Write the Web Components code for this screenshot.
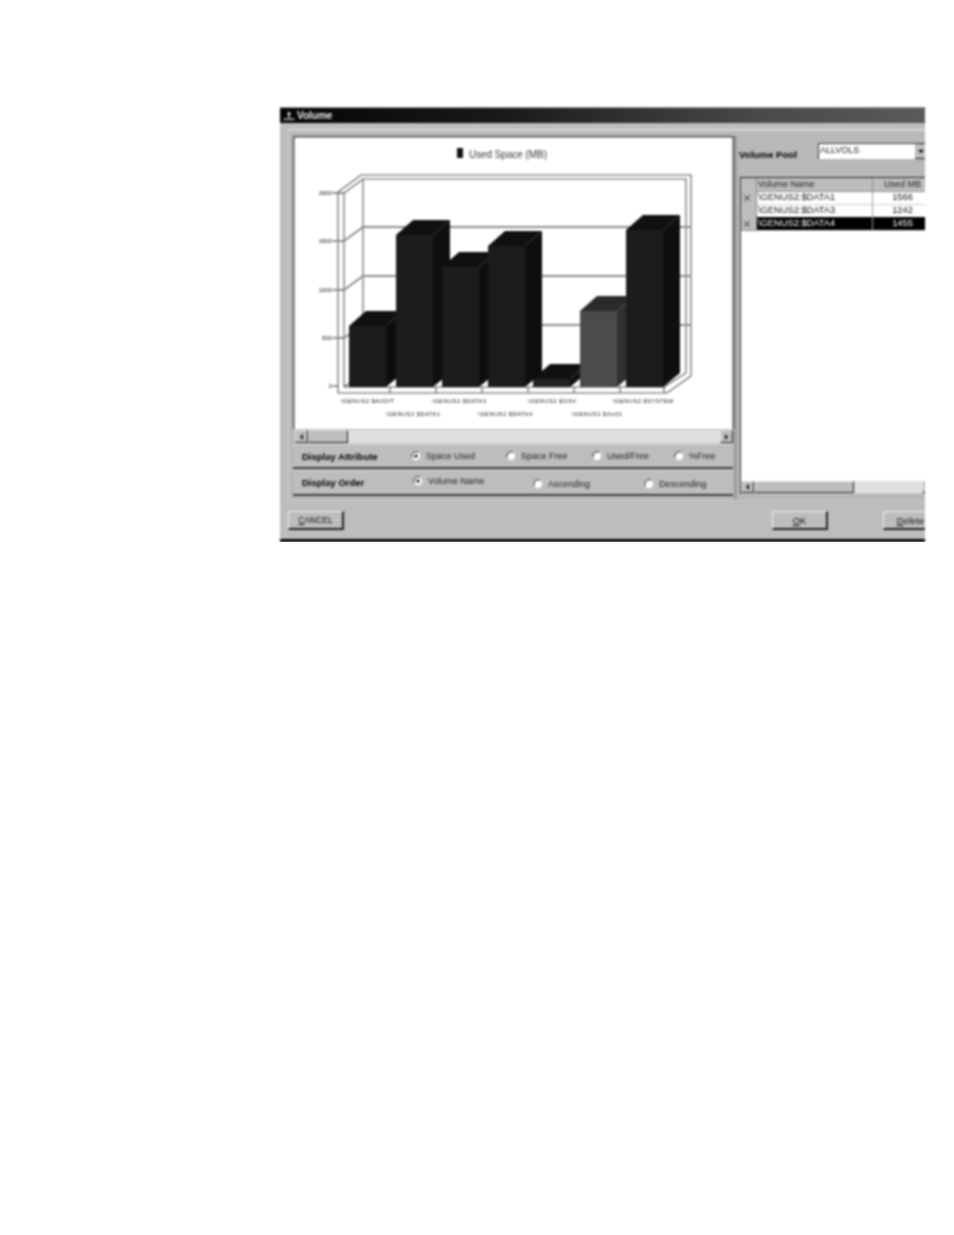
<!DOCTYPE html>
<html>
<head>
<meta charset="utf-8">
<title>Volume</title>
<style>
    body { margin: 0; background: #fff; font-family: "Liberation Sans", Arial, sans-serif; }
</style>
</head>
<body>
<vol-window>
    <vol-chart slot="chart"></vol-chart>
    <win-scrollbar slot="chart" thumb="40" style="height:14px;margin:1px 1px 0 2px"></win-scrollbar>
    <radio-row slot="chart" label="Display Attribute" columns="109px 95px 86px 82px auto" style="height:25px">
        <radio-opt checked>Space Used</radio-opt>
        <radio-opt>Space Free</radio-opt>
        <radio-opt>Used/Free</radio-opt>
        <radio-opt>%Free</radio-opt>
    </radio-row>
    <radio-row slot="chart" label="Display Order" columns="111px 120px 111px auto" style="height:26px;margin-top:1px">
        <radio-opt checked raised>Volume Name</radio-opt>
        <radio-opt low>Ascending</radio-opt>
        <radio-opt low>Descending</radio-opt>
    </radio-row>

    <vol-pool slot="side" value="ALLVOLS"></vol-pool>
    <vol-grid slot="side">
        <grid-row name="\GENUS2:$DATA1" mb="1566" marked></grid-row>
        <grid-row name="\GENUS2:$DATA3" mb="1242"></grid-row>
        <grid-row name="\GENUS2:$DATA4" mb="1455" marked selected></grid-row>
    </vol-grid>

    <win-button slot="cancel" key="C" rest="ANCEL" style="font-size:8.5px"></win-button>
    <win-button slot="ok" key="O" rest="K"></win-button>
    <win-button slot="delete" key="D" rest="elete"></win-button>
</vol-window>

<script>
class VolWindow extends HTMLElement {
    constructor() {
        super();
        this.attachShadow({ mode: 'open' });
    }

    connectedCallback() {
        this.shadowRoot.innerHTML = `
            <style>
                :host {
                    display: block;
                    box-sizing: border-box;
                    width: 645px;
                    height: 435px;
                    margin: 107px 0 0 280px;
                    overflow: hidden;
                    background: #bdbdbd;
                    border-top: 1px solid #999;
                    border-bottom: 3px solid #000;
                    filter: blur(0.8px);
                    color: #222;
                    font: 9.5px "Liberation Sans", Arial, sans-serif;
                }
                .title {
                    display: flex;
                    align-items: center;
                    gap: 2px;
                    height: 15px;
                    padding-left: 3px;
                    background: linear-gradient(90deg, #050505, #1a1a1a 35%, #4a4a4a 75%, #5a5a5a);
                    color: #eee;
                    font-weight: bold;
                    font-size: 10px;
                }
                .main {
                    display: flex;
                    box-sizing: border-box;
                    width: 700px;
                    height: 372px;
                    margin: 6px 0 0 8px;
                    padding: 5px 0 0 4px;
                    background: #b8b8b8;
                    border-top: 2px solid #d6d6d6;
                    border-left: 1px solid #d0d0d0;
                    border-bottom: 1px solid #c8c8c8;
                }
                .left {
                    display: flex;
                    flex-direction: column;
                    flex: none;
                    width: 441px;
                    border-right: 3px solid #9c9c9c;
                }
                .right {
                    display: flex;
                    flex-direction: column;
                    flex: none;
                    width: 240px;
                    padding-left: 2px;
                }
                .buttons {
                    display: grid;
                    grid-template-columns: 484px 111px 100px;
                    width: 700px;
                    padding: 10px 0 0 8px;
                }
            </style>
            <div class="title">
                <svg width="12" height="10" viewBox="0 0 12 10">
                    <circle cx="6" cy="2.5" r="1.6" fill="#ddd"/>
                    <path d="M5 4h2v2.5H5zM0.5 7.5h11v1.5h-11z" fill="#bbb"/>
                </svg>
                <span>Volume</span>
            </div>
            <div class="main">
                <div class="left"><slot name="chart"></slot></div>
                <div class="right"><slot name="side"></slot></div>
            </div>
            <div class="buttons">
                <slot name="cancel"></slot>
                <slot name="ok"></slot>
                <slot name="delete"></slot>
            </div>
        `;
    }
}

class VolChart extends HTMLElement {
    constructor() {
        super();
        this.attachShadow({ mode: 'open' });
    }

    bar(x, top, colors) {
        const w = 37, dx = 17, dy = 15, base = 387;
        return `
            <polygon points="${x},${top} ${x + dx},${top - dy} ${x + w + dx},${top - dy} ${x + w},${top}" fill="${colors[1]}"/>
            <polygon points="${x + w},${top} ${x + w + dx},${top - dy} ${x + w + dx},${base - 14} ${x + w},${base}" fill="${colors[2]}"/>
            <rect x="${x}" y="${top}" width="${w}" height="${base - top}" fill="${colors[0]}"/>
        `;
    }

    render() {
        const dark = ['#1c1c1c', '#101010', '#0e0e0e'];
        const bars = [
            [349, 326, dark],
            [396, 235, dark],
            [442, 267, dark],
            [488, 246, dark],
            [533, 379, ['#232323', '#101010', '#101010']],
            [580, 311, ['#4b4b4b', '#2a2a2a', '#303030']],
            [626, 230, dark],
        ];
        const grid = [[241, 227], [290, 276], [338, 325]];
        const axis = [['2000', 193], ['1500', 241], ['1000', 290], ['500', 338], ['0', 386]];
        const ticks = [390, 436, 482, 528, 574, 620];
        const labels = [
            ['\\GENUS2.$AUDIT', 341, 401, 53],
            ['\\GENUS2.$DATA1', 386, 414, 54],
            ['\\GENUS2.$DATA3', 432, 401, 54],
            ['\\GENUS2.$DATA4', 478, 414, 54],
            ['\\GENUS2.$OSV', 528, 401, 48],
            ['\\GENUS2.$Ox01', 572, 414, 50],
            ['\\GENUS2.$SYSTEM', 613, 401, 60],
        ];

        this.shadowRoot.innerHTML = `
            <style>
                :host { display: block; width: 441px; height: 293px; flex: none; }
                svg { display: block; }
                text { font-family: "Liberation Sans", Arial, sans-serif; fill: #111; }
                .wall { fill: none; stroke: #555; stroke-width: 1.1; }
                .grid { fill: none; stroke: #8c8c8c; stroke-width: 1.8; }
            </style>
            <svg width="441" height="293" viewBox="293 136 441 293">
                <rect x="293.7" y="136.7" width="439.6" height="293" fill="#fff" stroke="#444" stroke-width="1.4"/>

                <rect x="457" y="148" width="6" height="10" fill="#111"/>
                <text x="469" y="158" font-size="10" style="fill:#333" textLength="78">Used Space (MB)</text>

                <path class="wall" d="M338 393V192L361 175H691V376L667 393H338"/>
                <path class="wall" d="M344 387V193L363 179H686V373L664 387H344"/>
                <path class="wall" d="M363 179V373L344 387M664 387V393"/>
                ${grid.map(([front, back]) => `<path class="grid" d="M333 ${front}H344L363 ${back}H691"/>`).join('')}
                <path class="grid" d="M333 193H344M333 386H338"/>
                ${ticks.map(x => `<path class="wall" d="M${x} 387V393"/>`).join('')}

                ${axis.map(([t, y]) => `<text x="332" y="${y + 2}" font-size="6" text-anchor="end">${t}</text>`).join('')}
                ${bars.map(b => this.bar(...b)).join('')}
                ${labels.map(([t, x, y, w]) => `<text x="${x}" y="${y + 2}" font-size="5.6" textLength="${w}">${t}</text>`).join('')}
            </svg>
        `;
    }

    connectedCallback() {
        this.render();
    }
}

class WinScrollbar extends HTMLElement {
    constructor() {
        super();
        this.attachShadow({ mode: 'open' });
    }

    connectedCallback() {
        const thumb = this.getAttribute('thumb');
        this.shadowRoot.innerHTML = `
            <style>
                :host {
                    display: flex;
                    flex: none;
                    box-sizing: border-box;
                    background: #dfdfdf;
                    border-bottom: 1px solid #c8c8c8;
                }
                div {
                    box-sizing: border-box;
                    flex: none;
                    background: #bdbdbd;
                    border-right: 1px solid #222;
                    border-bottom: 1px solid #222;
                    border-top: 1px solid #e4e4e4;
                    border-left: 1px solid #e4e4e4;
                }
                .btn { display: flex; align-items: center; justify-content: center; width: 13px; }
                .thumb { width: ${thumb}px; }
                .fill { flex: 1; }
                i { width: 0; height: 0; border: 3px solid transparent; }
                .l i { border-right-color: #111; border-left-width: 0; }
                .r i { border-left-color: #111; border-right-width: 0; }
            </style>
            <div class="btn l"><i></i></div>
            <div class="thumb"></div>
            <span class="fill"></span>
            <div class="btn r"><i></i></div>
        `;
    }
}

class RadioRow extends HTMLElement {
    constructor() {
        super();
        this.attachShadow({ mode: 'open' });
    }

    connectedCallback() {
        this.shadowRoot.innerHTML = `
            <style>
                :host {
                    display: grid;
                    grid-template-columns: ${this.getAttribute('columns')};
                    align-items: center;
                    flex: none;
                    box-sizing: border-box;
                    padding-left: 9px;
                    margin-right: 1px;
                    background: #bdbdbd;
                    border-top: 1px solid #d2d2d2;
                    border-bottom: 2px solid #3c3c3c;
                }
                b { color: #000; font-size: 9.5px; }
            </style>
            <b>${this.getAttribute('label')}</b>
            <slot></slot>
        `;
    }
}

class RadioOpt extends HTMLElement {
    constructor() {
        super();
        this.attachShadow({ mode: 'open' });
    }

    connectedCallback() {
        const dot = this.hasAttribute('checked') ? '<circle cx="5" cy="5" r="1.6" fill="#000"/>' : '';
        this.shadowRoot.innerHTML = `
            <style>
                :host {
                    display: flex;
                    align-items: center;
                    gap: 5px;
                    color: #222;
                    font-size: 9px;
                }
                :host([raised]) { margin-top: -3px; }
                :host([low]) { margin-top: 3px; }
                svg { flex: none; }
            </style>
            <svg width="10" height="10" viewBox="0 0 10 10">
                <circle cx="5" cy="5" r="4.2" fill="#fff"/>
                <path d="M1.2 6.5A4.2 4.2 0 0 1 7 1.2" fill="none" stroke="#222" stroke-width="1"/>
                ${dot}
            </svg>
            <slot></slot>
        `;
    }
}

class VolPool extends HTMLElement {
    constructor() {
        super();
        this.attachShadow({ mode: 'open' });
    }

    connectedCallback() {
        this.shadowRoot.innerHTML = `
            <style>
                :host {
                    display: flex;
                    flex: none;
                    height: 16px;
                    margin-top: 7px;
                }
                b { width: 79px; flex: none; color: #000; font-size: 9.7px; padding-top: 6px; }
                .combo {
                    display: flex;
                    box-sizing: border-box;
                    flex: none;
                    width: 109px;
                    height: 16px;
                    background: #fff;
                    border-top: 1px solid #333;
                    border-left: 1px solid #333;
                    color: #222;
                    font-size: 9px;
                }
                .val { flex: 1; padding: 1px 0 0 1px; }
                .arrow {
                    display: flex;
                    align-items: center;
                    justify-content: center;
                    box-sizing: border-box;
                    width: 12px;
                    background: #bdbdbd;
                    border-bottom: 1px solid #222;
                }
                i { width: 0; height: 0; border: 3px solid transparent; border-top-color: #000; border-bottom-width: 0; }
            </style>
            <b>Volume Pool</b>
            <div class="combo">
                <span class="val">${this.getAttribute('value')}</span>
                <span class="arrow"><i></i></span>
            </div>
        `;
    }
}

class VolGrid extends HTMLElement {
    constructor() {
        super();
        this.attachShadow({ mode: 'open' });
    }

    connectedCallback() {
        this.shadowRoot.innerHTML = `
            <style>
                :host {
                    display: flex;
                    flex-direction: column;
                    flex: none;
                    box-sizing: border-box;
                    width: 195px;
                    height: 317px;
                    margin: 18px 0 0 1px;
                    background: #fff;
                    border-top: 1px solid #222;
                    border-left: 1px solid #333;
                }
                .head {
                    display: grid;
                    grid-template-columns: 16px 116px 60px;
                    height: 13px;
                    flex: none;
                    background: #bdbdbd;
                    color: #222;
                    font-size: 9px;
                    line-height: 13px;
                }
                .head span { padding-left: 1px; border-right: 1px solid #8c8c8c; border-bottom: 1px solid #8c8c8c; box-sizing: border-box; }
                .head .mb { text-align: center; padding: 0; }
                .rows { flex: 1; }
                win-scrollbar { height: 13px; }
            </style>
            <div class="head"><span></span><span>Volume Name</span><span class="mb">Used MB</span></div>
            <div class="rows"><slot></slot></div>
            <win-scrollbar thumb="100"></win-scrollbar>
        `;
    }
}

class GridRow extends HTMLElement {
    constructor() {
        super();
        this.attachShadow({ mode: 'open' });
    }

    connectedCallback() {
        const mark = this.hasAttribute('marked')
            ? '<svg width="8" height="8" viewBox="0 0 8 8"><path d="M1 1L7 7M7 1L1 7" stroke="#333" stroke-width="1"/></svg>'
            : '';
        this.shadowRoot.innerHTML = `
            <style>
                :host {
                    display: grid;
                    grid-template-columns: 16px 116px 60px;
                    height: 13px;
                    color: #111;
                    font-size: 9.3px;
                    line-height: 13px;
                }
                :host([selected]) .name, :host([selected]) .mb { background: #000; color: #fff; }
                span { box-sizing: border-box; border-bottom: 1px solid #d0d0d0; border-right: 1px solid #9a9a9a; }
                .mark {
                    display: flex;
                    align-items: center;
                    justify-content: center;
                    padding-right: 3px;
                    background: #bdbdbd;
                    border-bottom-color: #8c8c8c;
                    border-right-color: #8c8c8c;
                }
                .name { padding-left: 1px; }
                .mb { text-align: center; }
            </style>
            <span class="mark">${mark}</span>
            <span class="name">${this.getAttribute('name')}</span>
            <span class="mb">${this.getAttribute('mb')}</span>
        `;
    }
}

class WinButton extends HTMLElement {
    constructor() {
        super();
        this.attachShadow({ mode: 'open' });
    }

    connectedCallback() {
        this.shadowRoot.innerHTML = `
            <style>
                :host {
                    display: flex;
                    align-items: center;
                    justify-content: center;
                    box-sizing: border-box;
                    width: 56px;
                    height: 19px;
                    background: #bdbdbd;
                    border-top: 1px solid #ececec;
                    border-left: 1px solid #ececec;
                    border-right: 2px solid #222;
                    border-bottom: 2px solid #222;
                    color: #111;
                    font-size: 9.5px;
                }
            </style>
            <span><u>${this.getAttribute('key')}</u>${this.getAttribute('rest')}</span>
        `;
    }
}

customElements.define('vol-window', VolWindow);
customElements.define('vol-chart', VolChart);
customElements.define('win-scrollbar', WinScrollbar);
customElements.define('radio-row', RadioRow);
customElements.define('radio-opt', RadioOpt);
customElements.define('vol-pool', VolPool);
customElements.define('vol-grid', VolGrid);
customElements.define('grid-row', GridRow);
customElements.define('win-button', WinButton);
</script>
</body>
</html>
